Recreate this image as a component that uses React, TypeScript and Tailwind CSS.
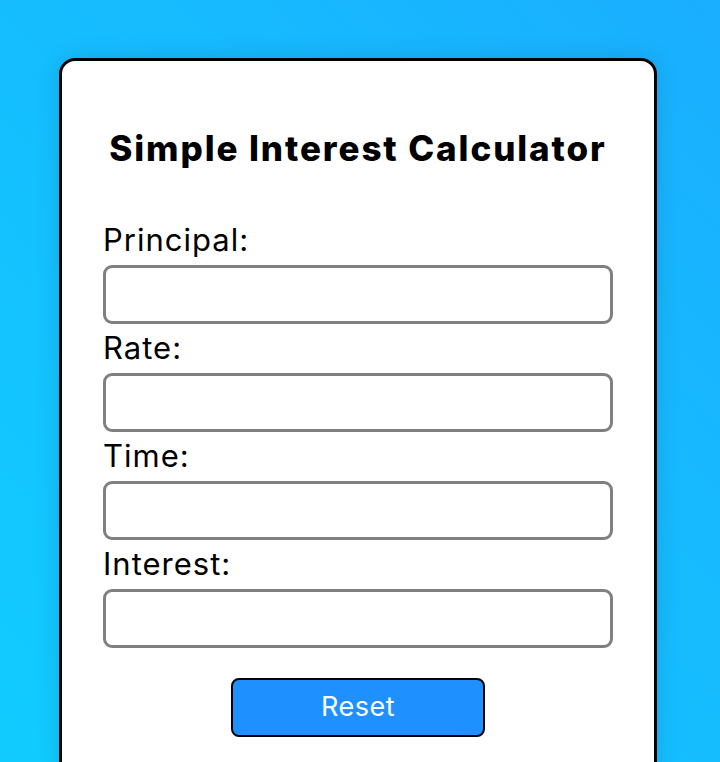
import React, { useState } from 'react';

const fields = ['Principal', 'Rate', 'Time', 'Interest'];

export default function App() {
  const [values, setValues] = useState<Record<string, string>>({});

  return (
    <div
      className="min-h-screen w-full pt-[58px] bg-linear-to-tr from-[#11ccff] to-[#1aafff]"
      style={{ fontFamily: 'Inter, "Noto Sans", sans-serif' }}
    >
      <div className="ml-[59px] w-[598px] rounded-[16px] border-[3px] border-black bg-white px-[41px] pt-[67px] pb-[41px] shadow-[0_0_24px_rgba(0,0,0,0.12)]">
        <h1 className="text-center text-[35px] leading-[40px] font-extrabold tracking-[1.9px] text-black">
          Simple Interest Calculator
        </h1>

        <div className="mt-[48px] flex flex-col">
          {fields.map((f) => (
            <div key={f} className="flex flex-col">
              <label className="h-[49px] pt-[2px] text-[31px] leading-[44px] tracking-[1px] text-black">{f}:</label>
              <input
                type="text"
                value={values[f] ?? ''}
                onChange={(e) => setValues({ ...values, [f]: e.target.value })}
                className="h-[59px] w-full rounded-[9px] border-[3px] border-[#808080] bg-white px-3 text-[24px] outline-none"
              />
            </div>
          ))}
        </div>

        <div className="mt-[30px] flex justify-center">
          <button
            onClick={() => setValues({})}
            className="h-[59px] w-[254px] rounded-[8px] border-[2.5px] border-black bg-[#1e90ff] text-[27px] tracking-[0.5px] text-white"
          >
            Reset
          </button>
        </div>
      </div>
    </div>
  );
}
